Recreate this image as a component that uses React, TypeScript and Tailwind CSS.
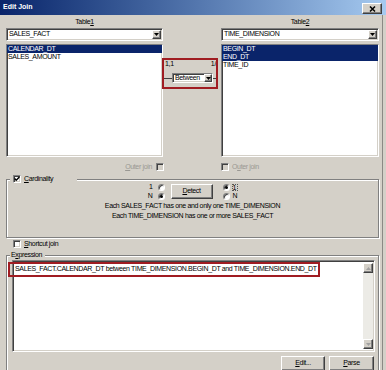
import React from "react";

const SUNKEN =
  "border border-t-[#808080] border-l-[#808080] border-b-white border-r-white shadow-[inset_1px_1px_0_#404040,inset_-1px_-1px_0_#d4d0c8]";
const RAISED =
  "border border-t-white border-l-white border-b-[#404040] border-r-[#404040] shadow-[inset_-1px_-1px_0_#808080]";

function Arrow({ up = false, color = "#000" }: { up?: boolean; color?: string }) {
  return (
    <svg width="5" height="3" viewBox="0 0 5 3">
      {up ? <path d="M0 3H5L2.5 0Z" fill={color} /> : <path d="M0 0H5L2.5 3Z" fill={color} />}
    </svg>
  );
}

function DropBtn({ w = "w-[9px]" }: { w?: string }) {
  return (
    <div className={`${RAISED} bg-[#d4d0c8] ${w} h-full flex items-center justify-center shrink-0`}>
      <Arrow />
    </div>
  );
}

function Combo({ text }: { text: string }) {
  return (
    <div className={`${SUNKEN} bg-white h-[13px] flex items-stretch p-[1px]`}>
      <span className="flex-1 pl-[1px] flex items-center">{text}</span>
      <DropBtn />
    </div>
  );
}

function ListBox({ items }: { items: [string, boolean][] }) {
  return (
    <div className={`${SUNKEN} bg-white h-[113px]`}>
      {items.map(([t, sel]) => (
        <div
          key={t}
          className={`h-[8px] leading-[8px] pl-[1px] ${sel ? "bg-[#0a246a] text-white" : ""}`}
        >
          {t}
        </div>
      ))}
    </div>
  );
}

function Check({ checked = false, disabled = false }: { checked?: boolean; disabled?: boolean }) {
  return (
    <div
      className={`${SUNKEN} w-[8px] h-[8px] shrink-0 ${disabled ? "bg-[#d4d0c8]" : "bg-white"} flex items-center justify-center`}
    >
      {checked && (
        <svg width="6" height="6" viewBox="0 0 6 6">
          <path d="M0.6 2.6L2.2 4.3L5.4 0.9" stroke="#000" strokeWidth="1.4" fill="none" />
        </svg>
      )}
    </div>
  );
}

function Radio({ checked = false }: { checked?: boolean }) {
  return (
    <div className="w-[7px] h-[7px] shrink-0 rounded-full border border-t-[#808080] border-l-[#808080] border-r-white border-b-white bg-white shadow-[inset_1px_1px_0_#404040] flex items-center justify-center">
      {checked && <div className="w-[3px] h-[3px] rounded-full bg-black" />}
    </div>
  );
}

function Button({ children, w }: { children: React.ReactNode; w: string }) {
  return (
    <div className={`${RAISED} bg-[#d4d0c8] ${w} h-[15px] flex items-center justify-center shrink-0`}>
      {children}
    </div>
  );
}

export default function App() {
  return (
    <div className="w-[386px] h-[370px] overflow-hidden bg-[#d4d0c8] flex flex-col font-['Liberation_Sans',Arial,sans-serif] text-[7px] tracking-[-0.35px] text-black">
      {/* Title bar */}
      <div className="h-[15px] shrink-0 flex items-center justify-between bg-linear-to-r from-[#0a246a] to-[#a6caf0] pl-[3px] pr-[4px]">
        <span className="text-white font-bold tracking-normal">Edit Join</span>
        <div className={`${RAISED} bg-[#d4d0c8] w-[20px] h-[11px] mt-[2px] flex items-center justify-center`}>
          <svg width="7" height="6" viewBox="0 0 7 6">
            <path d="M1 0.5L6 5.5M6 0.5L1 5.5" stroke="#000" strokeWidth="1.5" />
          </svg>
        </div>
      </div>

      <div className="flex flex-1 min-h-0">
        <div className="ml-[6px] w-[373px] flex flex-col">
          {/* Tables row */}
          <div className="flex h-[142px] shrink-0">
            <div className="w-[157px] flex flex-col">
              <div className="h-[13px] leading-[13px] text-center">
                Table<u>1</u>
              </div>
              <Combo text="SALES_FACT" />
              <div className="mt-[3px]">
                <ListBox
                  items={[
                    ["CALENDAR_DT", true],
                    ["SALES_AMOUNT", false],
                  ]}
                />
              </div>
            </div>

            <div className="w-[58px] pt-[43px]">
              <div className="-ml-[1px] w-[56px] h-[31px] border-2 border-[#a01c22] flex flex-col">
                <div className="h-[9px] flex items-center justify-between pl-[1px] overflow-hidden">
                  <span>1,1</span>
                  <span className="whitespace-nowrap">1/</span>
                </div>
                <div className="mt-[4px] h-[10px] flex items-center">
                  <div className="w-[8px] h-px bg-[#404040]" />
                  <div className={`${SUNKEN} bg-white w-[41px] h-[10px] flex items-stretch`}>
                    <span className="flex-1 pl-[2px] flex items-center">Between</span>
                    <DropBtn w="w-[8px]" />
                  </div>
                  <div className="flex-1 h-px bg-[#404040]" />
                </div>
              </div>
            </div>

            <div className="w-[158px] flex flex-col">
              <div className="h-[13px] leading-[13px] text-center">
                Table<u>2</u>
              </div>
              <Combo text="TIME_DIMENSION" />
              <div className="mt-[3px]">
                <ListBox
                  items={[
                    ["BEGIN_DT", true],
                    ["END_DT", true],
                    ["TIME_ID", false],
                  ]}
                />
              </div>
            </div>
          </div>

          {/* Outer join row */}
          <div className="mt-[6px] h-[8px] flex shrink-0 text-[#9a9893]">
            <div className="w-[158px] flex items-center justify-end gap-[4px]">
              <span>
                <u>O</u>uter join
              </span>
              <Check disabled />
            </div>
            <div className="w-[57px]" />
            <div className="flex items-center gap-[3px]">
              <Check disabled />
              <span>
                O<u>u</u>ter join
              </span>
            </div>
          </div>

          {/* Cardinality */}
          <fieldset className="mt-[4px] shrink-0 border border-[#808080] shadow-[inset_1px_1px_0_#fff,1px_1px_0_#fff] px-[3px] pb-[17px]">
            <legend className="bg-[#d4d0c8] h-[8px] w-[67px]">
              <div className="h-[8px] pl-[3px] flex items-center gap-[3px]">
                <Check checked />
                <span>
                  <u>C</u>ardinality
                </span>
              </div>
            </legend>
            <div className="flex justify-center">
              <div className="w-[18px] flex flex-col">
                <div className="h-[9px] flex items-center justify-end gap-[5px]">
                  <span>1</span>
                  <Radio />
                </div>
                <div className="h-[9px] flex items-center justify-end gap-[5px]">
                  <span>N</span>
                  <Radio checked />
                </div>
              </div>
              <div className="ml-[6px] mt-[1px]">
                <Button w="w-[42px]">
                  <span>
                    <u>D</u>etect
                  </span>
                </Button>
              </div>
              <div className="ml-[10px] w-[16px] flex flex-col">
                <div className="h-[9px] flex items-center gap-[2px]">
                  <Radio checked />
                  <span className="w-[6px] h-[7px] border border-dotted border-[#555] flex items-center justify-center leading-[5px] tracking-normal">
                    1
                  </span>
                </div>
                <div className="h-[9px] flex items-center gap-[3px]">
                  <Radio />
                  <span>N</span>
                </div>
              </div>
            </div>
            <div className="text-center leading-[9.5px]">
              <div>Each SALES_FACT has one and only one TIME_DIMENSION</div>
              <div>Each TIME_DIMENSION has one or more SALES_FACT</div>
            </div>
          </fieldset>

          {/* Shortcut join */}
          <div className="mt-[2px] h-[8px] pl-[7px] flex items-center gap-[3px] shrink-0">
            <Check />
            <span>
              <u>S</u>hortcut join
            </span>
          </div>

          {/* Expression */}
          <fieldset className="mt-[3px] shrink-0 border border-[#808080] shadow-[inset_1px_1px_0_#fff,1px_1px_0_#fff] pl-[3px] pr-[3px] pb-[10px]">
            <legend className="bg-[#d4d0c8] h-[9px] w-[35px]">
              <div className="h-[9px] pl-[1px] flex items-center">
                <span>
                  E<u>x</u>pression
                </span>
              </div>
            </legend>
            <div className={`${SUNKEN} bg-white ml-[2px] w-[363px] h-[92px] flex`}>
              <div className="flex-1 pt-[1px]">
                <div className="-ml-[5px] w-[312px] h-[15px] border-2 border-[#a01c22] pl-[5px] flex items-center whitespace-nowrap">
                  SALES_FACT.CALENDAR_DT between TIME_DIMENSION.BEGIN_DT and TIME_DIMENSION.END_DT
                </div>
              </div>
              <div className="my-[2px] mr-[1px] w-[10px] flex flex-col bg-[#ecebe6]">
                <div className={`${RAISED} bg-[#d4d0c8] h-[10px] flex items-center justify-center`}>
                  <Arrow up color="#a0a0a0" />
                </div>
                <div className="flex-1" />
                <div className={`${RAISED} bg-[#d4d0c8] h-[10px] flex items-center justify-center`}>
                  <Arrow color="#a0a0a0" />
                </div>
              </div>
            </div>
            <div className="mt-[4px] mr-[1px] flex justify-end gap-[4px]">
              <Button w="w-[44px]">
                <span>
                  <u>E</u>dit...
                </span>
              </Button>
              <Button w="w-[45px]">
                <span>
                  <u>P</u>arse
                </span>
              </Button>
            </div>
          </fieldset>
        </div>
        <div className="ml-[3px] w-[1px] bg-[#8b8985]" />
      </div>
    </div>
  );
}
